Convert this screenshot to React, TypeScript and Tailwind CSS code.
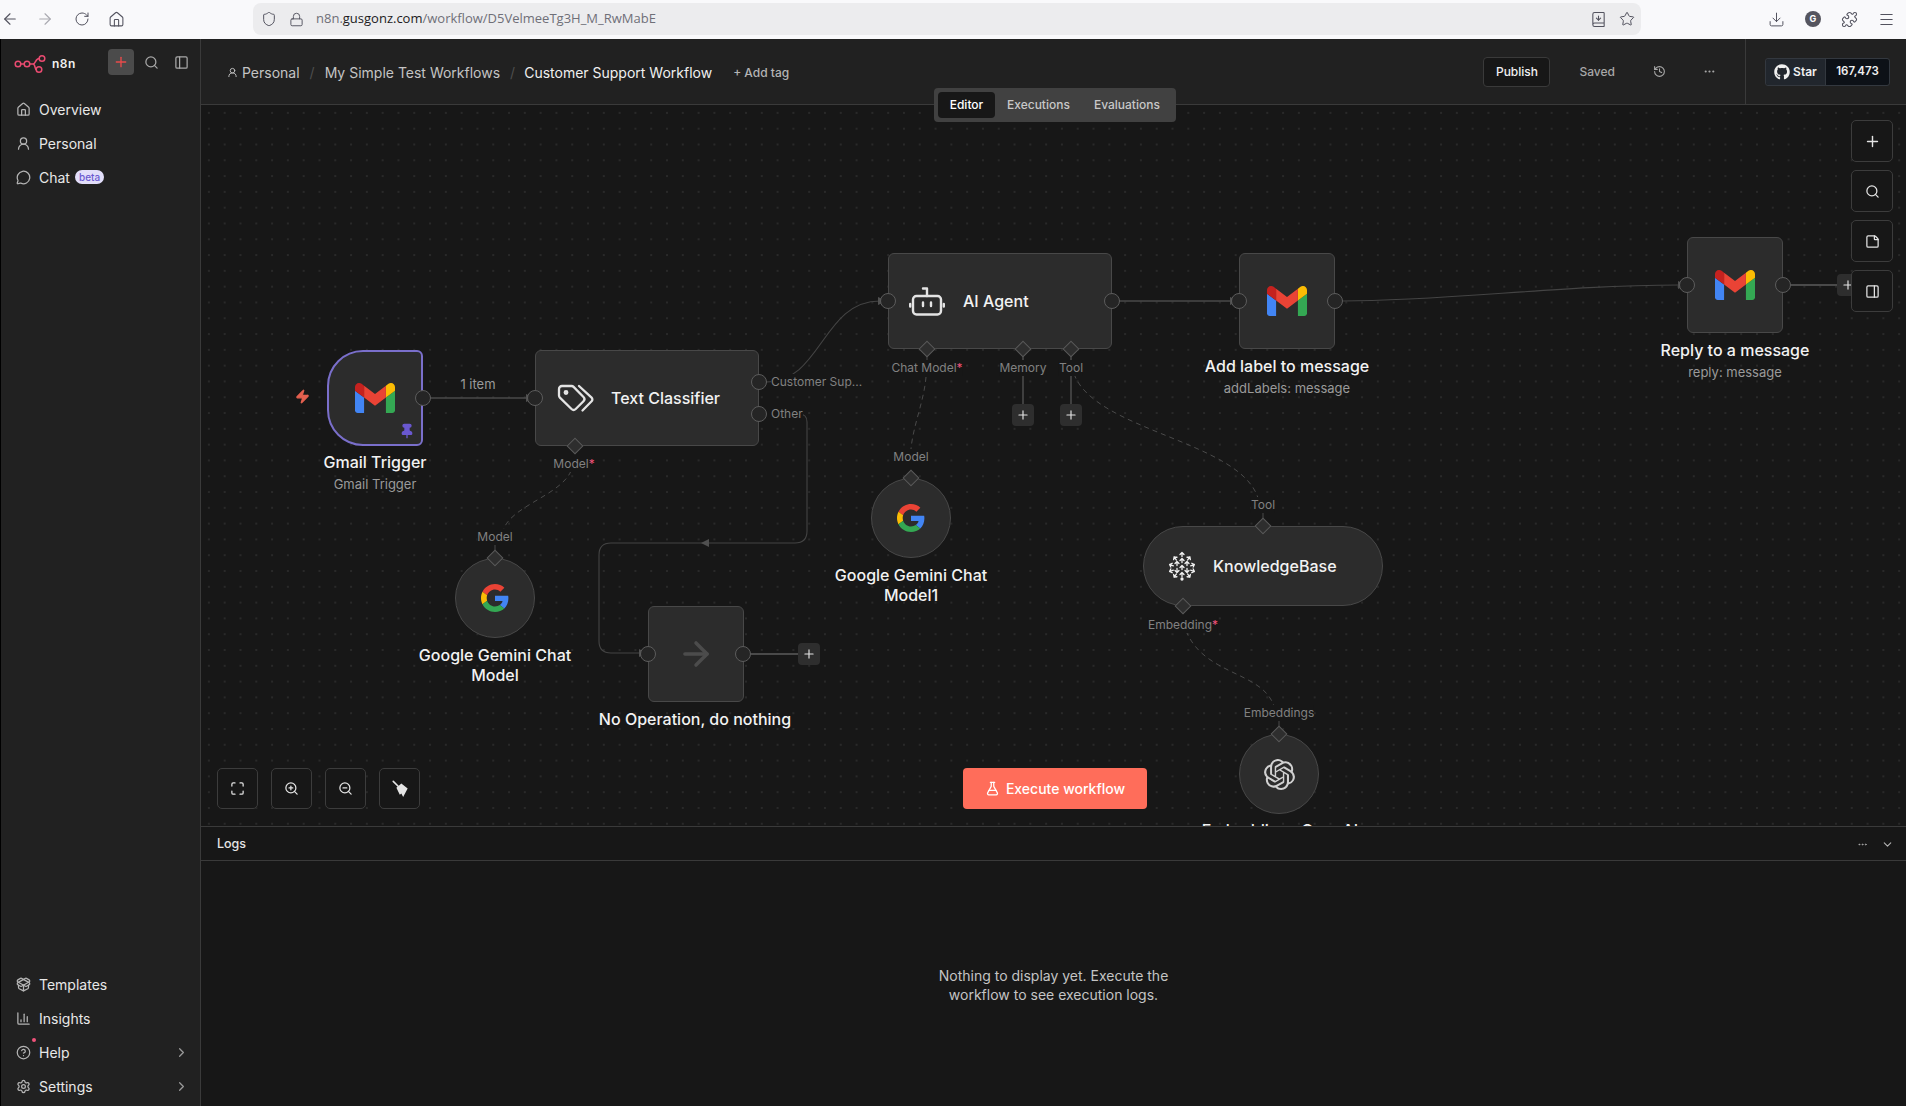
import React from "react";
import {
  ArrowLeft, ArrowRight, RotateCw, House, Shield, Lock, BookDown, Star, Download, Puzzle, Menu,
  Plus, Search, PanelLeft, UserRound, MessageCircle, PackageOpen, ChartColumn, CircleHelp, Settings,
  ChevronRight, ChevronDown, History, Ellipsis, Zap, Pin, FlaskConical, Maximize, ZoomIn, ZoomOut,
  StickyNote, PanelRight,
} from "lucide-react";
import { FaGithub } from "react-icons/fa";
import { SiOpenai } from "react-icons/si";

function Gmail() {
  return (
    <svg viewBox="52 42 88 66" className="w-[40px] h-[30px]">
      <path fill="#4285f4" d="M58 108h14V74L52 59v43c0 3.32 2.69 6 6 6" />
      <path fill="#34a853" d="M120 108h14c3.32 0 6-2.69 6-6V59l-20 15" />
      <path fill="#fbbc04" d="M120 48v26l20-15v-8c0-7.42-8.47-11.65-14.4-7.2" />
      <path fill="#ea4335" d="M72 74V48l24 18 24-18v26L96 92" />
      <path fill="#c5221f" d="M52 51v8l20 15V48l-5.6-4.2c-5.94-4.45-14.4-.22-14.4 7.2" />
    </svg>
  );
}

function GoogleG() {
  return (
    <svg viewBox="0 0 48 48" className="w-[28px] h-[28px]">
      <path fill="#EA4335" d="M24 9.5c3.54 0 6.71 1.22 9.21 3.6l6.85-6.85C35.9 2.38 30.47 0 24 0 14.62 0 6.51 5.38 2.56 13.22l7.98 6.19C12.43 13.72 17.74 9.5 24 9.5z" />
      <path fill="#4285F4" d="M46.98 24.55c0-1.57-.15-3.09-.38-4.55H24v9.02h12.94c-.58 2.96-2.26 5.48-4.78 7.18l7.73 6c4.51-4.18 7.09-10.36 7.09-17.65z" />
      <path fill="#FBBC05" d="M10.53 28.59c-.48-1.45-.76-2.99-.76-4.59s.27-3.14.76-4.59l-7.98-6.19C.92 16.46 0 20.12 0 24c0 3.88.92 7.54 2.56 10.78l7.97-6.19z" />
      <path fill="#34A853" d="M24 48c6.48 0 11.93-2.13 15.89-5.81l-7.73-6c-2.15 1.45-4.92 2.3-8.16 2.3-6.26 0-11.57-4.22-13.47-9.91l-7.98 6.19C6.51 42.62 14.62 48 24 48z" />
    </svg>
  );
}

function TagIcon() {
  return (
    <svg viewBox="0 0 37 30" fill="none" stroke="#e4e4e4" strokeWidth="2.3" strokeLinecap="round" strokeLinejoin="round" className="w-[37px] h-[30px]">
      <path d="M2 6a3 3 0 0 1 3-3h9.5a3 3 0 0 1 2.1.9L26.5 14a3 3 0 0 1 0 4.2L18.7 26a3 3 0 0 1-4.2 0L2.9 14.6A3 3 0 0 1 2 12.5Z" />
      <circle cx="9" cy="9.5" r="1.3" />
      <path d="M22 3l12.6 11.6a2.6 2.6 0 0 1 0 3.7L25.5 27.5" />
    </svg>
  );
}

function BotIcon() {
  return (
    <svg viewBox="0 0 36 30" fill="none" stroke="#e4e4e4" strokeWidth="2.4" strokeLinecap="round" strokeLinejoin="round" className="w-[36px] h-[30px]">
      <rect x="4" y="10" width="28" height="18.5" rx="3.5" />
      <path d="M18 10V2.5h-4" />
      <path d="M14 16.5v3.5M22 16.5v3.5" />
      <path d="M1.2 18v2.5M34.8 18v2.5" />
    </svg>
  );
}

function BroomIcon() {
  return (
    <svg viewBox="0 0 20 20" fill="currentColor" className="w-[18px] h-[18px]">
      <path d="M2.5 1.5L8.5 7.5" fill="none" stroke="currentColor" strokeWidth="1.8" strokeLinecap="round" />
      <path d="M6 8.5L11.5 3.8L18.5 9.5L13.5 19L11.5 15L9.8 16.4Z" />
    </svg>
  );
}

const pineArrows: [number, number, number][] = [
  [14, 3, 0], [7, 7, -35], [21, 7, 35], [14, 9, 0], [9, 12, 0], [19, 12, 0], [3, 14, -70], [25, 14, 70],
  [14, 16, 0], [3, 20, -110], [25, 20, 110], [9, 20, 180], [19, 20, 180], [14, 23, 0], [7, 25, -145], [21, 25, 145],
];

function KnowledgeIcon() {
  return (
    <svg viewBox="0 0 28 30" fill="none" stroke="#f2f2f2" strokeWidth="1.3" strokeLinecap="round" strokeLinejoin="round" className="w-[28px] h-[30px]">
      {pineArrows.map(([x, y, a], i) => (
        <g key={i} transform={`translate(${x} ${y}) rotate(${a})`}>
          <path d="M0 2.5V-1.5M-2 .5L0-1.5 2 .5" />
        </g>
      ))}
      <circle cx="14" cy="28" r="1" fill="#f2f2f2" />
    </svg>
  );
}

function Logo() {
  return (
    <svg viewBox="0 0 34 20" fill="none" stroke="#ea4b71" strokeWidth="1.5" className="w-[34px] h-[20px]">
      <circle cx="4" cy="10" r="2.8" />
      <circle cx="13" cy="10" r="2.8" />
      <circle cx="28" cy="4.5" r="2.8" />
      <circle cx="25" cy="15.5" r="2.8" />
      <path d="M6.8 10h3.4M15.8 10h3.2c3 0 2-5.5 6.2-5.5M19 10c2.6 0 1.6 5.5 3.2 5.5" />
    </svg>
  );
}

function SideItem({ icon, label, badge, chevron, dot }: { icon: React.ReactNode; label: string; badge?: boolean; chevron?: boolean; dot?: boolean }) {
  return (
    <div className="relative flex items-center h-[34px] pl-[15px] pr-[11px] text-[14px] text-[#e8e8e8]">
      <span className="w-[23px] flex text-[#b4b4b4]">{icon}</span>
      {dot && <span className="absolute left-[31px] top-[3px] w-[4px] h-[4px] rounded-full bg-[#f0527a]" />}
      <span>{label}</span>
      {badge && <span className="ml-[5px] px-[4px] h-[14px] flex items-center rounded-full bg-[#e2defa] text-[#6a5ad0] text-[10px] font-medium">beta</span>}
      {chevron && <ChevronRight size={15} className="ml-auto text-[#9a9a9a]" />}
    </div>
  );
}

function Handle({ className }: { className: string }) {
  return <span className={`absolute w-[16px] h-[16px] -translate-x-1/2 -translate-y-1/2 rounded-full bg-[#252525] border border-[#5c5c5c] ${className}`} />;
}

function Diamond({ className }: { className: string }) {
  return <span className={`absolute w-[12px] h-[12px] -translate-x-1/2 -translate-y-1/2 rotate-45 bg-[#2e2e2e] border border-[#585858] ${className}`} />;
}

function PortLabel({ className, text, required }: { className: string; text: string; required?: boolean }) {
  return (
    <span className={`absolute -translate-x-1/2 -translate-y-1/2 whitespace-nowrap bg-[#171717] text-[12px] leading-[16px] text-[#818181] ${className}`}>
      {text}
      {required && <span className="text-[#f0527a]">*</span>}
    </span>
  );
}

function AddBtn({ className }: { className: string }) {
  return (
    <span className={`absolute w-[22px] h-[22px] -translate-x-1/2 -translate-y-1/2 flex items-center justify-center rounded-[4px] bg-[#2e2e2e] text-[#e4e4e4] ${className}`}>
      <Plus size={14} strokeWidth={2} />
    </span>
  );
}

function Title({ className, title, sub }: { className: string; title: string; sub?: string }) {
  return (
    <div className={`absolute -translate-x-1/2 w-[200px] text-center ${className}`}>
      <div className="text-[16px] leading-[20px] font-medium text-[#f2f2f2]">{title}</div>
      {sub && <div className="text-[13px] leading-[18px] mt-[3px] text-[#9a9a9a]">{sub}</div>}
    </div>
  );
}

function Tool({ children, small }: { children: React.ReactNode; small?: boolean }) {
  return (
    <div className={`flex items-center justify-center rounded-[5px] border border-[#3c3c3c] bg-[#171717] text-[#e4e4e4] ${small ? "w-[41px] h-[41px]" : "w-[42px] h-[42px]"}`}>
      {children}
    </div>
  );
}

const box = "absolute box-border bg-[#2c2c2c] flex items-center";
const edge = "border border-[#484848]";

function Canvas() {
  return (
    <div className="relative flex-1 overflow-hidden bg-[#171717] bg-[radial-gradient(circle,#292929_0.7px,transparent_1px)] bg-[length:15.8px_15.8px]">
      <svg viewBox="201 104 1705 721" fill="none" className="absolute left-0 top-0 w-[1705px] h-[721px]">
        <g stroke="#4a4a4a" strokeWidth="1.3">
          <path d="M431 397H527" />
          <path d="M1119 300H1231" />
          <path d="M1791 284H1840" strokeWidth="1.8" />
          <path d="M751 653H800" strokeWidth="1.8" />
          <path d="M1023 355V405M1071 355V405" strokeWidth="1.6" />
          <path d="M927 355V362M495 543V549M1263 511V517M1279 719V725" strokeWidth="1" />
        </g>
        <g stroke="#444444" strokeWidth="1.1">
          <path d="M766 381C822 381 822 300 880 300" />
          <path d="M795 413h4q8 0 8 8V530q0 12-12 12H611q-12 0-12 12V640q0 12 12 12H640" />
          <path d="M1343 300C1450 300 1560 284 1679 284" />
        </g>
        <g stroke="#4a4a4a" strokeWidth="1" strokeDasharray="5 4">
          <path d="M571 470C560 495 510 505 503 530" />
          <path d="M926 376C924 400 913 425 911 448" />
          <path d="M1074 373C1095 430 1240 440 1258 497" />
          <path d="M1186 630C1205 675 1262 670 1274 705" />
        </g>
        <g fill="#505050">
          <path d="M535 397l-9-4v8z" />
          <path d="M887 300l-9-4v8z" />
          <path d="M1239 300l-9-4v8z" />
          <path d="M1687 284l-9-4v8z" />
          <path d="M647 652l-8-4v8z" />
          <path d="M701 542l8-4v8z" />
        </g>
      </svg>

      <Zap size={15} fill="#e5604f" stroke="#e5604f" className="absolute left-[94px] top-[284px]" />

      <div className={`${box} left-[126px] top-[245px] w-[96px] h-[96px] justify-center rounded-l-[36px] rounded-r-[6px] border-2 border-[#7a6fcb]`}>
        <Gmail />
        <Pin size={16} fill="#6a58d0" stroke="#6a58d0" className="absolute right-[6px] bottom-[5px]" />
      </div>
      <div className={`${box} ${edge} left-[334px] top-[245px] w-[224px] h-[96px] rounded-[6px] pl-[21px] gap-[17px]`}>
        <TagIcon />
        <span className="text-[16px] font-medium text-[#f2f2f2]">Text Classifier</span>
      </div>
      <div className={`${box} ${edge} left-[687px] top-[148px] w-[224px] h-[96px] rounded-[6px] pl-[20px] gap-[18px]`}>
        <BotIcon />
        <span className="text-[16px] font-medium text-[#f2f2f2]">AI Agent</span>
      </div>
      <div className={`${box} ${edge} left-[1038px] top-[148px] w-[96px] h-[96px] rounded-[6px] justify-center`}><Gmail /></div>
      <div className={`${box} ${edge} left-[1486px] top-[132px] w-[96px] h-[96px] rounded-[6px] justify-center`}><Gmail /></div>
      <div className={`${box} ${edge} left-[447px] top-[501px] w-[96px] h-[96px] rounded-[6px] justify-center`}>
        <ArrowRight size={38} strokeWidth={2.2} className="text-[#4c4c4c]" />
      </div>
      <div className={`${box} ${edge} left-[254px] top-[453px] w-[80px] h-[80px] rounded-full justify-center`}><GoogleG /></div>
      <div className={`${box} ${edge} left-[670px] top-[373px] w-[80px] h-[80px] rounded-full justify-center`}><GoogleG /></div>
      <div className={`${box} ${edge} left-[1038px] top-[629px] w-[80px] h-[80px] rounded-full justify-center`}>
        <SiOpenai size={31} className="text-[#d0d0d0]" />
      </div>
      <div className={`${box} ${edge} left-[942px] top-[421px] w-[240px] h-[80px] rounded-full pl-[24px] gap-[17px]`}>
        <KnowledgeIcon />
        <span className="text-[16px] font-medium text-[#f2f2f2]">KnowledgeBase</span>
      </div>

      <Handle className="left-[222px] top-[293px]" />
      <Handle className="left-[334px] top-[293px]" />
      <Handle className="left-[558px] top-[277px]" />
      <Handle className="left-[558px] top-[309px]" />
      <Handle className="left-[687px] top-[196px]" />
      <Handle className="left-[911px] top-[196px]" />
      <Handle className="left-[1038px] top-[196px]" />
      <Handle className="left-[1134px] top-[196px]" />
      <Handle className="left-[1486px] top-[180px]" />
      <Handle className="left-[1582px] top-[180px]" />
      <Handle className="left-[447px] top-[549px]" />
      <Handle className="left-[542px] top-[549px]" />

      <Diamond className="left-[374px] top-[341px]" />
      <Diamond className="left-[726px] top-[244px]" />
      <Diamond className="left-[822px] top-[244px]" />
      <Diamond className="left-[870px] top-[244px]" />
      <Diamond className="left-[294px] top-[453px]" />
      <Diamond className="left-[710px] top-[373px]" />
      <Diamond className="left-[1062px] top-[421px]" />
      <Diamond className="left-[982px] top-[501px]" />
      <Diamond className="left-[1078px] top-[629px]" />

      <span className="absolute left-[277px] top-[280px] -translate-x-1/2 -translate-y-1/2 text-[13px] text-[#9a9a9a]">1 item</span>
      <PortLabel className="left-[373px] top-[359px]" text="Model" required />
      <PortLabel className="left-[726px] top-[263px]" text="Chat Model" required />
      <PortLabel className="left-[822px] top-[263px]" text="Memory" />
      <PortLabel className="left-[870px] top-[263px]" text="Tool" />
      <PortLabel className="left-[294px] top-[432px]" text="Model" />
      <PortLabel className="left-[710px] top-[352px]" text="Model" />
      <PortLabel className="left-[1062px] top-[400px]" text="Tool" />
      <PortLabel className="left-[982px] top-[520px]" text="Embedding" required />
      <PortLabel className="left-[1078px] top-[608px]" text="Embeddings" />
      <span className="absolute left-[570px] top-[269px] bg-[#171717] text-[12px] leading-[16px] text-[#818181] whitespace-nowrap">Customer Sup...</span>
      <span className="absolute left-[570px] top-[301px] bg-[#171717] text-[12px] leading-[16px] text-[#818181] whitespace-nowrap">Other</span>

      <AddBtn className="left-[608px] top-[549px]" />
      <AddBtn className="left-[822px] top-[310px]" />
      <AddBtn className="left-[870px] top-[310px]" />
      <AddBtn className="left-[1647px] top-[180px]" />

      <Title className="left-[174px] top-[347px]" title="Gmail Trigger" sub="Gmail Trigger" />
      <Title className="left-[294px] top-[540px]" title="Google Gemini Chat Model" />
      <Title className="left-[494px] top-[604px]" title="No Operation, do nothing" />
      <Title className="left-[710px] top-[460px]" title="Google Gemini Chat Model1" />
      <Title className="left-[1086px] top-[251px]" title="Add label to message" sub="addLabels: message" />
      <Title className="left-[1534px] top-[235px]" title="Reply to a message" sub="reply: message" />
      <Title className="left-[1079px] top-[715px]" title="Embeddings OpenAI" />

      <div className="absolute right-[13px] top-[15px] flex flex-col gap-[8px]">
        <Tool><Plus size={17} /></Tool>
        <Tool><Search size={15} /></Tool>
        <Tool><StickyNote size={15} /></Tool>
        <Tool><PanelRight size={15} /></Tool>
      </div>

      <div className="absolute left-[16px] bottom-[17px] flex gap-[13px]">
        <Tool small><Maximize size={15} /></Tool>
        <Tool small><ZoomIn size={15} /></Tool>
        <Tool small><ZoomOut size={15} /></Tool>
        <Tool small><BroomIcon /></Tool>
      </div>

      <div className="absolute left-[762px] bottom-[17px] w-[184px] h-[41px] flex items-center justify-center gap-[6px] rounded-[4px] bg-[#ff6d5a] text-white text-[14px] font-medium">
        <FlaskConical size={15} />
        <span>Execute workflow</span>
      </div>
    </div>
  );
}

export default function App() {
  return (
    <div className="w-[1906px] h-[1106px] flex flex-col overflow-hidden bg-[#171717] font-[Inter,sans-serif]">
      <div className="h-[39px] shrink-0 flex items-center pb-[1px] bg-[#f9f9fb] text-[#52525e]">
        <div className="flex items-center gap-[17px] pl-[1px]">
          <ArrowLeft size={18} strokeWidth={1.5} />
          <ArrowRight size={18} strokeWidth={1.5} className="text-[#a9a9b0]" />
          <RotateCw size={16} strokeWidth={1.5} className="ml-[3px]" />
          <House size={17} strokeWidth={1.5} className="ml-[1px]" />
        </div>
        <div className="ml-[128px] w-[1388px] h-[32px] flex items-center rounded-[8px] bg-[#ececee] pl-[8px] pr-[6px]">
          <Shield size={16} strokeWidth={1.5} />
          <Lock size={15} strokeWidth={1.5} className="ml-[12px]" />
          <span className="ml-[12px] font-['Open_Sans',sans-serif] text-[13px] text-[#6f6f78]">
            n8n.<span className="text-[#1c1b22]">gusgonz.com</span>/workflow/D5VelmeeTg3H_M_RwMabE
          </span>
          <BookDown size={17} strokeWidth={1.5} className="ml-auto" />
          <Star size={16} strokeWidth={1.5} className="ml-[12px]" />
        </div>
        <div className="flex items-center ml-[127px] gap-[20px]">
          <Download size={17} strokeWidth={1.4} />
          <span className="w-[16px] h-[16px] rounded-full bg-[#55555f] text-white text-[9px] font-bold flex items-center justify-center">G</span>
          <Puzzle size={17} strokeWidth={1.5} />
          <Menu size={17} strokeWidth={1.5} />
        </div>
      </div>

      <div className="flex-1 flex min-h-0">
        <div className="w-[201px] shrink-0 flex flex-col border-l border-r border-l-black border-r-[#3a3a3a] bg-[#212121]">
          <div className="h-[53px] shrink-0 flex items-start pt-[10px] pl-[13px]">
            <div className="flex items-center h-[26px] gap-[4px] mt-[2px]">
              <Logo />
              <span className="text-[12px] font-semibold text-[#f0f0f0] tracking-[0.5px]">n8n</span>
            </div>
            <div className="ml-[32px] w-[26px] h-[26px] flex items-center justify-center rounded-[4px] bg-[#4b4b4b] text-[#ea4b4b]">
              <Plus size={16} strokeWidth={2} />
            </div>
            <div className="h-[26px] flex items-center gap-[15px] ml-[10px] text-[#a8a8a8]">
              <Search size={15} />
              <PanelLeft size={15} />
            </div>
          </div>
          <SideItem icon={<House size={15} />} label="Overview" />
          <SideItem icon={<UserRound size={15} />} label="Personal" />
          <SideItem icon={<MessageCircle size={15} />} label="Chat" badge />
          <div className="mt-auto pb-[3px]">
            <SideItem icon={<PackageOpen size={15} />} label="Templates" />
            <SideItem icon={<ChartColumn size={15} />} label="Insights" />
            <SideItem icon={<CircleHelp size={15} />} label="Help" chevron dot />
            <SideItem icon={<Settings size={15} />} label="Settings" chevron />
          </div>
        </div>

        <div className="flex-1 min-w-0 flex flex-col">
          <div className="relative z-10 h-[66px] shrink-0 flex items-center border-b border-[#3a3a3a] bg-[#212121]">
            <div className="flex items-center pl-[26px] pt-[2px] text-[14px] text-[#c4c4c4]">
              <UserRound size={11} className="mr-[4px]" />
              <span>Personal</span>
              <span className="mx-[10px] text-[#4e4e4e]">/</span>
              <span>My Simple Test Workflows</span>
              <span className="ml-[10px] mr-[9px] text-[#4e4e4e]">/</span>
              <span className="text-[#f0f0f0]">Customer Support Workflow</span>
              <span className="ml-[21px] text-[12px] font-medium text-[#b4b4b4]">+ Add tag</span>
            </div>
            <div className="ml-auto flex items-center h-full">
              <div className="w-[67px] h-[30px] flex items-center justify-center rounded-[4px] border border-[#3a3a3a] bg-[#171717] text-[12px] font-medium text-[#f0f0f0]">Publish</div>
              <span className="ml-[29px] text-[12px] font-medium text-[#a8a8a8]">Saved</span>
              <History size={13} className="ml-[38px] text-[#a8a8a8]" />
              <Ellipsis size={13} className="ml-[37px] text-[#a8a8a8]" />
              <div className="ml-[29px] h-full w-[161px] pl-[19px] flex items-center border-l border-[#3a3a3a]">
                <div className="flex h-[28px] w-[125px] rounded-[3px] border border-[#33383f] text-[12px] font-semibold text-[#f0f0f0]">
                  <div className="w-[60px] flex items-center justify-center gap-[3px] bg-[#21262d] rounded-l-[3px] border-r border-[#33383f]">
                    <FaGithub size={16} />
                    <span>Star</span>
                  </div>
                  <div className="flex-1 flex items-center justify-center bg-[#0d1117] rounded-r-[3px] text-[11.5px]">167,473</div>
                </div>
              </div>
            </div>
            <div className="absolute left-[733px] top-[49px] w-[242px] h-[34px] flex items-center pl-[4px] rounded-[4px] bg-[#414141] text-[12px] font-medium text-[#c8c8c8]">
              <span className="w-[57px] h-[26px] flex items-center justify-center rounded-[4px] bg-[#171717] text-white">Editor</span>
              <span className="ml-[12px]">Executions</span>
              <span className="ml-[24px]">Evaluations</span>
            </div>
          </div>

          <Canvas />

          <div className="h-[280px] shrink-0 flex flex-col border-t border-[#3a3a3a] bg-[#171717]">
            <div className="h-[34px] shrink-0 flex items-center pl-[16px] pr-[12px] pt-[1px] border-b border-[#3a3a3a] text-[12.5px] font-medium text-[#e4e4e4]">
              <span>Logs</span>
              <Ellipsis size={11} className="ml-auto text-[#a8a8a8]" />
              <ChevronDown size={13} className="ml-[13px] text-[#b4b4b4]" />
            </div>
            <div className="flex-1 flex items-center justify-center pt-[2px] text-center text-[14px] leading-[19px] text-[#c4c4c4]">
              <div>Nothing to display yet. Execute the<br />workflow to see execution logs.</div>
            </div>
          </div>
        </div>
      </div>
    </div>
  );
}
